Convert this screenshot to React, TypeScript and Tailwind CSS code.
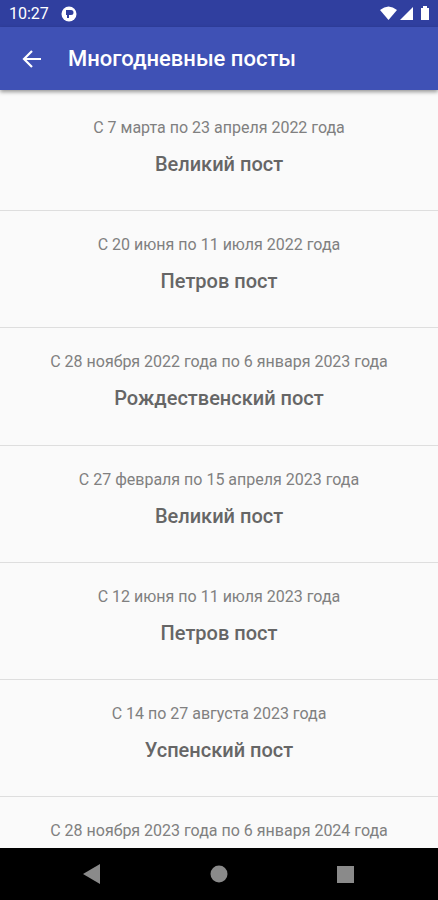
const posts = [
  { date: "С 7 марта по 23 апреля 2022 года", name: "Великий пост" },
  { date: "С 20 июня по 11 июля 2022 года", name: "Петров пост" },
  { date: "С 28 ноября 2022 года по 6 января 2023 года", name: "Рождественский пост" },
  { date: "С 27 февраля по 15 апреля 2023 года", name: "Великий пост" },
  { date: "С 12 июня по 11 июля 2023 года", name: "Петров пост" },
  { date: "С 14 по 27 августа 2023 года", name: "Успенский пост" },
  { date: "С 28 ноября 2023 года по 6 января 2024 года", name: "Рождественский пост" },
];

function StatusBar() {
  return (
    <div className="flex h-[27px] shrink-0 items-center bg-[#303f9f] pl-[9px] text-white">
      <span className="text-[16px] leading-none">10:27</span>
      <svg className="ml-3" width="16" height="16" viewBox="0 0 16 16">
        <circle cx="8" cy="8" r="7.5" fill="white" />
        <path d="M5 4h5a2.5 2.5 0 0 1 0 5H8v3H6V9H5z" fill="#303f9f" />
      </svg>
      <svg className="ml-auto" width="58" height="27" viewBox="0 0 58 27" fill="white">
        <path d="M0 10Q8.500 3 17 10L8.500 20z" />
        <path d="M33 7v13H20z" />
        <path d="M41 8h2V6h4v2h2v12h-8z" />
      </svg>
    </div>
  );
}

export default function App() {
  return (
    <div className="flex h-[900px] w-[438px] flex-col overflow-hidden bg-[#fafafa] font-[Roboto,sans-serif]">
      <StatusBar />

      {/* Toolbar */}
      <header className="z-10 flex h-[63px] shrink-0 items-center bg-[#3f51b5] pl-[22px] text-white shadow-[0_2px_4px_rgba(0,0,0,0.4)]">
        <svg width="20" height="20" viewBox="0 0 20 20" fill="none" stroke="white" strokeWidth="2.200">
          <path d="M19 10H3M10 2L2 10l8 8" />
        </svg>
        <h1 className="ml-[26px] text-[22px] font-medium">Многодневные посты</h1>
      </header>

      {/* Posts list */}
      <main className="min-h-0 flex-1 overflow-hidden pt-[4px]">
        {posts.map((post) => (
          <div key={post.date} className="h-[117.200px] border-b border-[#dedede] pt-[22px] text-center">
            <p className="text-[16px] leading-6 text-[#808080]">{post.date}</p>
            <h2 className="mt-[10px] text-[20px] leading-7 font-medium text-[#666666]">{post.name}</h2>
          </div>
        ))}
      </main>

      {/* Navigation bar */}
      <nav className="flex h-[52px] shrink-0 items-center bg-black">
        <svg width="438" height="52" viewBox="0 0 438 52" fill="#8a8a8a">
          <path d="M83 26l17-10v20z" />
          <circle cx="219" cy="26" r="8.500" />
          <path d="M337 18h17v17h-17z" />
        </svg>
      </nav>
    </div>
  );
}
